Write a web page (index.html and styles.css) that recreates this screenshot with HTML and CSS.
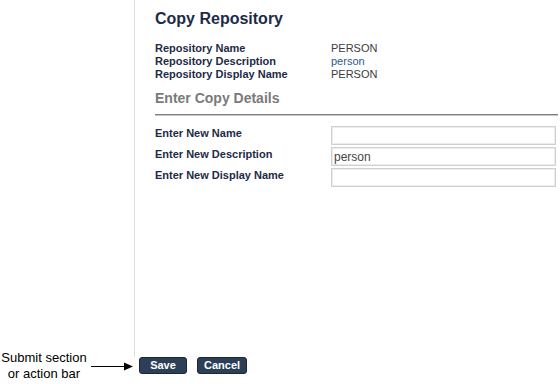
FILE: index.html
```html
<!DOCTYPE html>
<html>
<head>
<meta charset="utf-8">
<link rel="stylesheet" href="styles.css">
</head>
<body>
<div class="page">
  <div class="side">
    <div class="note">
      <div class="note-text">Submit section<br>or action bar</div>
      <svg class="arrow" width="42" height="9" viewBox="0 0 42 9">
        <line x1="0" y1="4.5" x2="34" y2="4.5" stroke="#000" stroke-width="1"/>
        <polygon points="33,0.5 42,4.5 33,8.5" fill="#000"/>
      </svg>
    </div>
  </div>
  <div class="main">
    <div class="panel">
      <h1 class="title">Copy Repository</h1>
      <div class="info">
        <div class="lbl">Repository Name</div><div class="val">PERSON</div>
        <div class="lbl">Repository Description</div><div class="val link">person</div>
        <div class="lbl">Repository Display Name</div><div class="val">PERSON</div>
      </div>
      <h2 class="section">Enter Copy Details</h2>
      <div class="form">
        <label class="flbl">Enter New Name</label><input class="inp" type="text" value="">
        <label class="flbl">Enter New Description</label><input class="inp" type="text" value="person">
        <label class="flbl">Enter New Display Name</label><input class="inp" type="text" value="">
      </div>
    </div>
    <div class="actions">
      <button class="btn">Save</button>
      <button class="btn">Cancel</button>
    </div>
  </div>
</div>
</body>
</html>
```
FILE: styles.css
```css
html, body {
  margin: 0;
  padding: 0;
  background: #fff;
  overflow: hidden;
}
body {
  font-family: "Liberation Sans", Arial, sans-serif;
  color: #1d2b47;
}
.page {
  display: flex;
  height: 384px;
}
.side {
  width: 134px;
  flex: none;
  display: flex;
  flex-direction: column;
  justify-content: flex-end;
  padding-bottom: 2px;
  box-sizing: border-box;
}
.note {
  display: flex;
  align-items: center;
  gap: 3px;
}
.note-text {
  width: 88px;
  font-size: 13px;
  line-height: 16px;
  color: #000;
  text-align: center;
  white-space: nowrap;
}
.arrow {
  display: block;
  margin-top: 1px;
}
.main {
  flex: 1;
  display: flex;
  flex-direction: column;
}
.panel {
  height: 357px;
  flex: none;
  border-left: 1px solid #dedede;
  padding: 9px 2px 0 20px;
  box-sizing: border-box;
}
.title {
  margin: 0;
  font-size: 16px;
  line-height: 19px;
  font-weight: bold;
  color: #1d2b47;
}
.info {
  display: grid;
  grid-template-columns: 176px auto;
  margin-top: 14px;
  font-size: 11px;
  line-height: 13px;
}
.lbl {
  font-weight: bold;
  color: #1d2b47;
}
.val {
  color: #3c3c3c;
}
.val.link {
  color: #2b5797;
}
.section {
  margin: 9px 0 0;
  padding-bottom: 8px;
  font-size: 14px;
  line-height: 16px;
  font-weight: bold;
  color: #7a7a7a;
  border-bottom: 1px solid #808080;
  box-shadow: 0 1px 0 #c4c4c4;
}
.form {
  display: grid;
  grid-template-columns: 176px 225px;
  row-gap: 2px;
  margin-top: 11px;
}
.flbl {
  font-size: 11px;
  line-height: 13px;
  font-weight: bold;
  color: #1d2b47;
  padding-top: 1px;
}
.inp {
  box-sizing: border-box;
  height: 19px;
  width: 225px;
  margin: 0;
  padding: 0 0 0 2px;
  border: 1px solid #d0d0d0;
  box-shadow: inset 0 0 0 1px #ececec;
  font-family: "Liberation Sans", Arial, sans-serif;
  font-size: 12px;
  color: #444;
  background: #fff;
  outline: none;
}
.actions {
  display: flex;
  gap: 10px;
  padding-left: 5px;
}
.btn {
  box-sizing: border-box;
  min-width: 48px;
  height: 17px;
  padding: 0 6px;
  margin: 0;
  border: 1px solid #1a283a;
  border-radius: 3px;
  background: #2c3f57;
  color: #fff;
  font-family: "Liberation Sans", Arial, sans-serif;
  font-size: 11px;
  font-weight: bold;
  line-height: 15px;
  cursor: pointer;
}
```
